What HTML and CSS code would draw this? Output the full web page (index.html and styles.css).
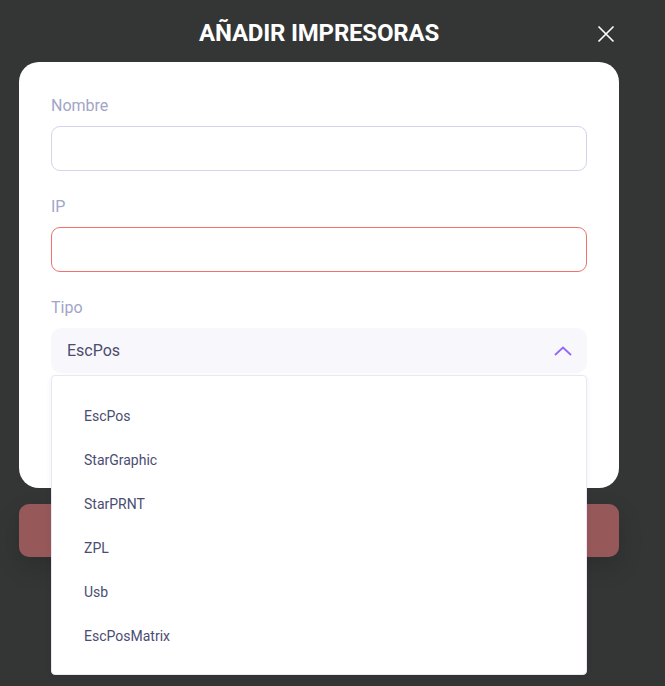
FILE: index.html
```html
<!DOCTYPE html>
<html>

<head>
  <meta charset="utf-8">
  <title>Añadir impresoras</title>
  <meta name="viewport" content="width=device-width, initial-scale=1">
  <link rel="stylesheet" href="styles.css">
</head>

<body>
  <div class="modal">
    <div class="modal-header">
      <h1>AÑADIR IMPRESORAS</h1>
      <button class="close-btn" type="button" aria-label="Cerrar">
        <svg width="18" height="18" viewBox="0 0 18 18">
          <path d="M1.5 1.5 L16.5 16.5 M16.5 1.5 L1.5 16.5" stroke="#ffffff" stroke-width="1.6" fill="none" />
        </svg>
      </button>
    </div>

    <form class="card">
      <div class="field">
        <label>Nombre</label>
        <input type="text" class="text-input">
      </div>
      <div class="field">
        <label>IP</label>
        <input type="text" class="text-input error">
      </div>
      <div class="field field-last">
        <label>Tipo</label>
        <div class="select">
          <div class="select-box">
            <span>EscPos</span>
            <svg width="18" height="10" viewBox="0 0 18 10">
              <path d="M1 9 L9 1.5 L17 9" stroke="#9466f7" stroke-width="1.8" fill="none" />
            </svg>
          </div>
          <!-- lista abierta del selector -->
          <ul class="select-menu">
            <li>EscPos</li>
            <li>StarGraphic</li>
            <li>StarPRNT</li>
            <li>ZPL</li>
            <li>Usb</li>
            <li>EscPosMatrix</li>
          </ul>
        </div>
      </div>
    </form>

    <button class="save-btn" type="button">Guardar</button>
  </div>
</body>

</html>
```

FILE: styles.css
```css
body {
  margin: 0;
  padding: 0;
  background-color: #343635;
  font-family: Roboto, "Liberation Sans", sans-serif;
  height: 100vh;
  overflow: hidden;
}

.modal {
  padding: 0 46px 0 19px;
}

.modal-header {
  position: relative;
  height: 62px;
  display: flex;
  justify-content: center;
  align-items: center;
}

h1 {
  margin: 0;
  color: #ffffff;
  font-size: 24px;
  font-weight: 700;
  letter-spacing: -0.2px;
  padding-top: 4px;
}

.close-btn {
  position: absolute;
  right: 4px;
  top: 25px;
  background: none;
  border: none;
  padding: 0;
  cursor: pointer;
}

.card {
  background-color: #ffffff;
  border-radius: 20px;
  padding: 33px 32px 115px 32px;
}

.field {
  display: flex;
  flex-direction: column;
  margin-bottom: 25px;
}

.field-last {
  margin-bottom: 0;
}

label {
  color: #a2a5c8;
  font-size: 16px;
  line-height: 21px;
  margin-bottom: 10px;
}

.text-input {
  height: 45px;
  box-sizing: border-box;
  border: 1px solid #d6d3ec;
  border-radius: 9px;
  background: #ffffff;
  outline: none;
}

.text-input.error {
  border-color: #f2716b;
}

.select {
  position: relative;
}

.select-box {
  height: 45px;
  box-sizing: border-box;
  background-color: #f8f8fc;
  border-radius: 10px;
  display: flex;
  align-items: center;
  justify-content: space-between;
  padding: 0 15px 0 16px;
  color: #4b4c6e;
  font-size: 16px;
}

.select-menu {
  position: absolute;
  left: 0;
  right: 0;
  top: 47px;
  margin: 0;
  padding: 18px 0 16px 0;
  list-style: none;
  background-color: #ffffff;
  border: 1px solid #e9e7f5;
  border-radius: 4px;
  box-shadow: 0 2px 6px rgba(0, 0, 0, 0.06);
  z-index: 10;
}

.select-menu li {
  height: 44px;
  line-height: 44px;
  padding-left: 32px;
  color: #4a4d72;
  font-size: 14px;
}

.save-btn {
  display: block;
  width: 100%;
  height: 53px;
  margin-top: 16px;
  border: none;
  border-radius: 10px;
  background-color: #975859;
  color: #ffffff;
  font-size: 16px;
  box-shadow: 0 10px 24px rgba(0, 0, 0, 0.15);
}
```
